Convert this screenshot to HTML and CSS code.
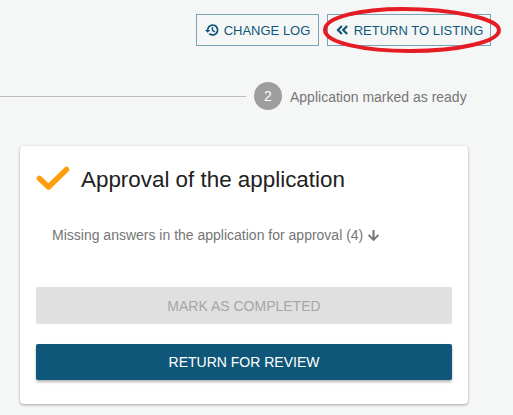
FILE: index.html
```html
<!DOCTYPE html>
<html lang="en">
<head>
    <meta charset="UTF-8">
    <title>Approval of the application</title>
    <link rel="stylesheet" href="styles.css">
</head>
<body>

    <div class="actions">
        <a class="outline-btn log-btn">
            <svg class="btn-icon" viewBox="0 0 24 24"><path d="M13 2a10 10 0 0 0-10 10H0l4.500 4.800L9 12H6a7 7 0 1 1 2.200 5.100l-2.100 2.100A10 10 0 1 0 13 2zm-1.500 5v6.200l5 3 1.300-2.100-3.800-2.200V7z"/></svg>
            <span>CHANGE LOG</span>
        </a>
        <a class="outline-btn return-btn">
            <svg class="btn-icon" viewBox="0 0 24 24"><path d="M10.500 4 2.500 12l8 8 2.600-2.600L7.700 12l5.400-5.400zM19.500 4l-8 8 8 8 2.600-2.600-5.400-5.400 5.400-5.400z"/></svg>
            <span>RETURN TO LISTING</span>
        </a>
    </div>

    <div class="stepper">
        <div class="step-line"></div>
        <div class="step-num">2</div>
        <div class="step-label">Application marked as ready</div>
    </div>

    <div class="card">
        <div class="card-head">
            <svg class="check" viewBox="0 0 34 25"><path d="M3.500 12.500 12.500 21 30.500 3.500" fill="none" stroke="#ff9e0c" stroke-width="5.500" stroke-linecap="round" stroke-linejoin="round"/></svg>
            <h2>Approval of the application</h2>
        </div>
        <div class="missing">
            <span>Missing answers in the application for approval (4)</span>
            <svg class="arrow" viewBox="0 0 24 24"><path d="M21 12l-2.200-2.200-5.200 5.200V3h-3.200v12L5.200 9.800 3 12l9 9z"/></svg>
        </div>
        <button class="wide-btn disabled">MARK AS COMPLETED</button>
        <button class="wide-btn primary">RETURN FOR REVIEW</button>
    </div>

    <!-- red marker drawn over the screenshot -->
    <svg class="marker" viewBox="0 0 513 60"><path d="M403 9C360 9 325 17 325 30c0 13 40 21 85 21 48 0 89-9 89-21C499 18 450 9 403 9z" fill="none" stroke="#e51c23" stroke-width="4"/></svg>

</body>
</html>
```

FILE: styles.css
```css
body {
    margin: 0;
    height: 415px;
    overflow: hidden;
    position: relative;
    background: #f5f7f7;
    font-family: "Liberation Sans", Arial, sans-serif;
}

.actions {
    display: flex;
    justify-content: flex-end;
    gap: 8px;
    padding: 14px 22px 0 0;
}

.outline-btn {
    display: flex;
    align-items: center;
    justify-content: center;
    gap: 5px;
    height: 32px;
    box-sizing: border-box;
    border: 1px solid #7ba3b8;
    color: #0f5779;
    font-size: 13px;
    white-space: nowrap;
}

.log-btn {
    width: 123px;
}

.return-btn {
    width: 164px;
}

.btn-icon {
    flex-shrink: 0;
    width: 14px;
    height: 14px;
    fill: #0f5779;
}

.stepper {
    display: flex;
    align-items: center;
    margin-top: 36px;
}

.step-line {
    width: 246px;
    height: 1px;
    background: #bdbdbd;
}

.step-num {
    width: 28px;
    height: 28px;
    margin-left: 8px;
    border-radius: 50%;
    background: #9e9e9e;
    color: white;
    font-size: 14px;
    line-height: 28px;
    text-align: center;
}

.step-label {
    margin: 2px 0 0 8px;
    color: #757575;
    font-size: 14px;
}

.card {
    width: 448px;
    height: 258px;
    box-sizing: border-box;
    margin: 36px 0 0 20px;
    padding: 20px 16px 0;
    background: white;
    border-radius: 4px;
    box-shadow: 0 1px 3px rgba(0, 0, 0, 0.35);
}

.card-head {
    display: flex;
    align-items: center;
    gap: 11px;
    height: 25px;
}

.check {
    width: 34px;
    height: 25px;
}

h2 {
    margin: 2px 0 0;
    color: #212121;
    font-size: 22.4px;
    font-weight: normal;
}

.missing {
    display: flex;
    align-items: center;
    gap: 3px;
    margin: 34px 0 0 16px;
    height: 20px;
    color: #757575;
    font-size: 14px;
}

.arrow {
    width: 15px;
    height: 15px;
    fill: #757575;
}

.wide-btn {
    display: block;
    width: 416px;
    border: none;
    border-radius: 2px;
    font-family: inherit;
    font-size: 14px;
}

.disabled {
    height: 37px;
    margin-top: 42px;
    background: #e0e0e0;
    color: #a6a6a6;
}

.primary {
    height: 36px;
    margin-top: 20px;
    background: #0f5779;
    color: white;
    box-shadow: 0 2px 3px rgba(0, 0, 0, 0.3);
}

.marker {
    position: absolute;
    left: 0;
    top: 0;
    width: 513px;
    height: 60px;
}
```
